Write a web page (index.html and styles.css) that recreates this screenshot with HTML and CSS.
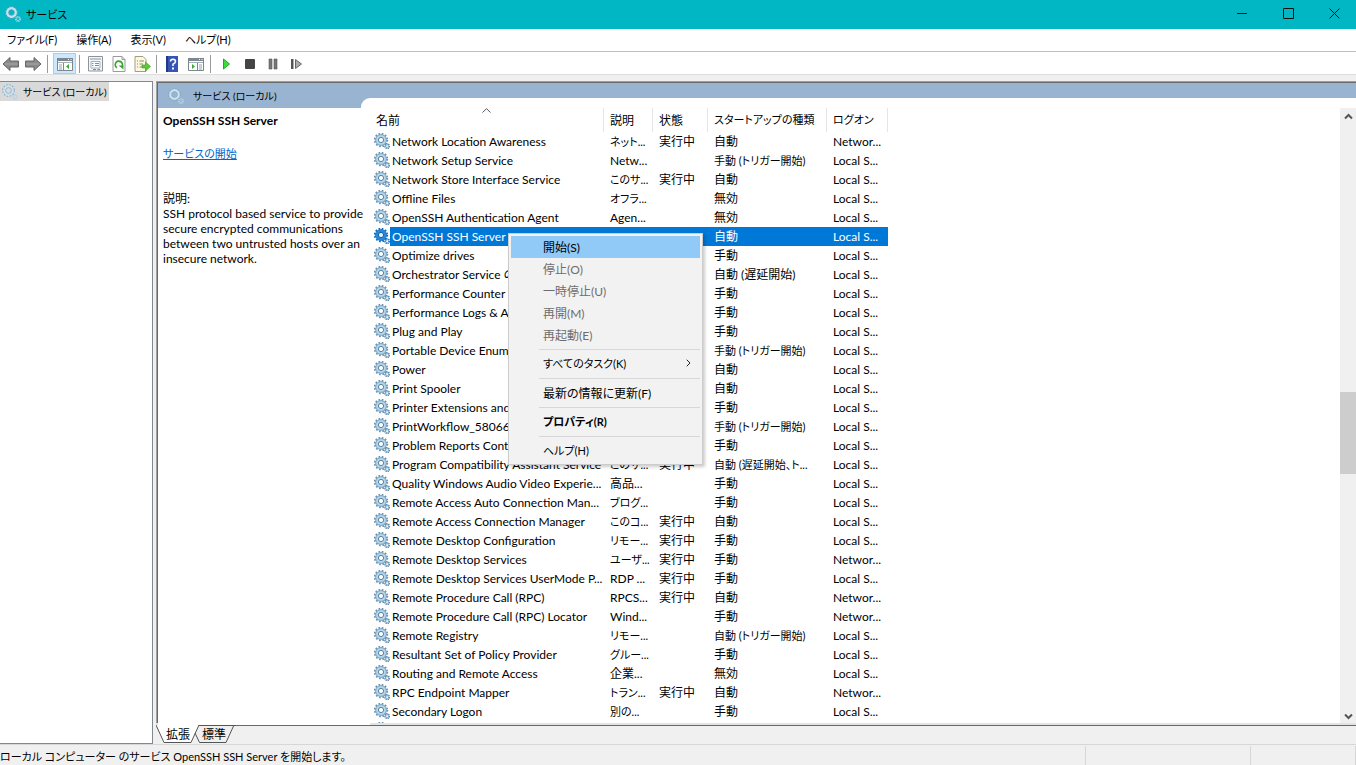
FILE: index.html
```
<!DOCTYPE html>
<html lang="ja">
<head>
    <meta charset="UTF-8">
    <meta name="viewport" content="width=device-width, initial-scale=1.0">
    <title>サービス</title>
    <link rel="stylesheet" href="styles.css">
</head>
<body>
    <svg class="defs" aria-hidden="true">
        <symbol id="gear" viewBox="0 0 16 16">
            <circle cx="7" cy="7" r="6" fill="#a9cbe2" stroke="#6a91af" stroke-width="2.4" stroke-dasharray="1.6 1.54"/>
            <circle cx="7" cy="7" r="4" fill="#fff" stroke="#b4d5ea" stroke-width="3"/>
            <circle cx="7" cy="7" r="5.3" fill="none" stroke="#7fa5c2" stroke-width=".8"/>
            <circle cx="7" cy="7" r="2.6" fill="#fff" stroke="#5480a3" stroke-width="1"/>
            <circle cx="13.2" cy="13.2" r="2.2" fill="#b4d5ea" stroke="#5f88a8" stroke-width="1.8" stroke-dasharray="1 .73"/>
            <circle cx="13.2" cy="13.2" r=".8" fill="#fff"/>
        </symbol>
        <symbol id="gear-light" viewBox="0 0 16 16">
            <circle cx="6.5" cy="6.5" r="5.5" fill="none" stroke="#7fa3bd" stroke-width="1.6" stroke-dasharray="1.5 1.38"/>
            <circle cx="6.5" cy="6.5" r="4.2" fill="none" stroke="#c9e2f1" stroke-width="2.4"/>
            <circle cx="6.5" cy="6.5" r="2.9" fill="none" stroke="#7fa3bd" stroke-width=".6"/>
            <circle cx="13" cy="13" r="2" fill="none" stroke="#b5d3e5" stroke-width="2" stroke-dasharray="1 .57"/>
        </symbol>
        <symbol id="gear-selected" viewBox="0 0 16 16">
            <circle cx="7" cy="7" r="6" fill="#2b87d6" stroke="#0f6cbd" stroke-width="2.4" stroke-dasharray="1.6 1.54"/>
            <circle cx="7" cy="7" r="4" fill="none" stroke="#2b87d6" stroke-width="3"/>
            <circle cx="7" cy="7" r="2.6" fill="#e6f3fd" stroke="#0763b3" stroke-width="1"/>
            <circle cx="13.2" cy="13.2" r="2" fill="none" stroke="#1473c8" stroke-width="2" stroke-dasharray="1 .57"/>
        </symbol>
    </svg>

    <div class="window">
        <header class="titlebar">
            <svg class="icon"><use href="#gear-light"/></svg>
            <h1>サービス</h1>
            <div class="window-buttons">
                <button aria-label="最小化"><svg viewBox="0 0 11 11"><path d="M0 5.500H10"/></svg></button>
                <button aria-label="最大化"><svg viewBox="0 0 11 11"><path d="M.5 .5H10.500V10.500H.5Z"/></svg></button>
                <button aria-label="閉じる"><svg viewBox="0 0 11 11"><path d="M.5 .5L10.500 10.500M10.500 .5L.5 10.500"/></svg></button>
            </div>
        </header>

        <nav class="menubar">
            <button>ファイル(F)</button>
            <button>操作(A)</button>
            <button>表示(V)</button>
            <button>ヘルプ(H)</button>
        </nav>

        <div class="toolbar">
            <button aria-label="戻る"><svg viewBox="0 0 18 16"><path d="M1 8L8 1.500V5H16.500V11H8V14.500Z" fill="#8b8b8b" stroke="#666"/><path d="M3 8H15.500" stroke="#a9a9a9"/></svg></button>
            <button aria-label="進む"><svg viewBox="0 0 18 16"><path d="M17 8L10 1.500V5H1.500V11H10V14.500Z" fill="#8b8b8b" stroke="#666"/><path d="M2.500 8H15" stroke="#a9a9a9"/></svg></button>
            <span class="sep"></span>
            <button class="active" aria-label="コンソール ツリーの表示">
                <svg viewBox="0 0 18 16">
                    <path d="M1.500 2.500H16.500V14.500H1.500Z" fill="#fff" stroke="#7d8790"/>
                    <path d="M1 2H17V5H1Z" fill="#7d8790"/><path d="M12 3.500H13M14.500 3.500H15.500" stroke="#fff"/>
                    <path d="M2 6.500H16" stroke="#a8b0b7"/><path d="M7.500 7V14" stroke="#7d8790"/>
                    <path d="M3 9H6M3 11H6M3 13H6" stroke="#8fa3b5"/><path d="M13 8V13L10 10.500Z" fill="#3cab34"/>
                </svg>
            </button>
            <span class="sep"></span>
            <button class="wide" aria-label="プロパティ">
                <svg viewBox="0 0 18 16">
                    <path d="M2.500 .5H16.500V15H2.500Z" fill="#f4f7fa" stroke="#8b949c"/><path d="M4 3H15" stroke="#8b949c"/>
                    <path d="M5 5.500H14V12H5Z" fill="#fff" stroke="#9fb1c2"/><path d="M6 7.500H7.500M9 7.500H13M6 9.500H7.500M9 9.500H13" stroke="#7c91a5"/>
                    <path d="M7 13.500H10M11.500 13.500H14" stroke="#3d9cd8"/>
                </svg>
            </button>
            <button aria-label="最新の情報に更新">
                <svg viewBox="0 0 18 16">
                    <path d="M3 .5H12L15 3.500V15.500H3Z" fill="#fff" stroke="#9b9b9b"/><path d="M12 .5V3.500H15" fill="none" stroke="#9b9b9b"/>
                    <path d="M7 11.800A3.600 3.600 0 1 1 12 10.500" fill="none" stroke="#3aa832" stroke-width="1.800"/><path d="M8.500 9.500H13.500V13.500Z" fill="#3aa832"/>
                </svg>
            </button>
            <button aria-label="一覧のエクスポート">
                <svg viewBox="0 0 18 16">
                    <path d="M2 .5H10L13 3.500V15.500H2Z" fill="#fdf8e0" stroke="#a49c80"/>
                    <path d="M4 5H5M6.500 5H11M4 8H5M6.500 8H10M4 11H5M6.500 11H9" stroke="#8f8a70"/>
                    <path d="M9 9H12.500V6L17.500 10.500L12.500 15V12H9Z" fill="#5dc936" stroke="#3d9a25" stroke-width=".6"/>
                </svg>
            </button>
            <span class="sep"></span>
            <button class="wide" aria-label="ヘルプ"><svg viewBox="0 0 18 16"><path d="M3 0H15V16H3Z" fill="#3455b5"/><path d="M3 0H5V16H3Z" fill="#203a86"/><path d="M7.500 5.500Q7.500 3.200 10 3.200T12.500 5.500Q12.500 7 10 8.200V10" fill="none" stroke="#fff" stroke-width="1.600"/><path d="M9 11.500H11V13.500H9Z" fill="#fff"/></svg></button>
            <button aria-label="操作ウィンドウの表示">
                <svg viewBox="0 0 18 16">
                    <path d="M1.500 2.500H16.500V14.500H1.500Z" fill="#fff" stroke="#7d8790"/>
                    <path d="M1 2H17V5H1Z" fill="#7d8790"/><path d="M12 3.500H13M14.500 3.500H15.500" stroke="#fff"/>
                    <path d="M2 6.500H16" stroke="#a8b0b7"/><path d="M10.500 7V14" stroke="#7d8790"/>
                    <path d="M12 9H15M12 11H15M12 13H15" stroke="#8fa3b5"/><path d="M5 8V13L8 10.500Z" fill="#3cab34"/>
                </svg>
            </button>
            <span class="sep"></span>
            <button class="wide" aria-label="サービスの開始"><svg viewBox="0 0 18 16"><path d="M6.500 3L12.500 8L6.500 13Z" fill="#3ddc3d" stroke="#20a820"/></svg></button>
            <button aria-label="サービスの停止"><svg viewBox="0 0 18 16"><rect x="4" y="3" width="10" height="10" rx="1" fill="#444"/></svg></button>
            <button aria-label="サービスの一時停止"><svg viewBox="0 0 18 16"><path d="M5 3H8V13H5ZM10 3H13V13H10Z" fill="#777" stroke="#555" stroke-width=".6"/></svg></button>
            <button aria-label="サービスの再起動"><svg viewBox="0 0 18 16"><path d="M4 3H6.500V13H4Z" fill="#555"/><path d="M8.500 3.500L14.500 8L8.500 12.500Z" fill="#aaa" stroke="#666"/></svg></button>
        </div>

        <main class="panes">
            <aside class="tree">
                <button class="tree-item"><svg class="icon"><use href="#gear-light"/></svg><span>サービス (ローカル)</span></button>
            </aside>

            <section class="view">
                <div class="view-body">
                    <div class="detail">
                        <h2 class="detail-title"><svg class="icon"><use href="#gear-light"/></svg>サービス (ローカル)</h2>
                        <div class="detail-text">
                            <h3>OpenSSH SSH Server</h3>
                            <a href="#">サービスの開始</a>
                            <p class="label">説明:</p>
                            <p>SSH protocol based service to provide secure encrypted communications between two untrusted hosts over an insecure network.</p>
                        </div>
                    </div>
                    <div class="list">
                        <table>
                            <colgroup>
                                <col class="c-name"><col class="c-desc"><col class="c-state"><col class="c-start"><col class="c-logon">
                            </colgroup>
                            <thead>
                                <tr>
                                    <th>名前<svg class="sort" viewBox="0 0 9 5"><path d="M.5 4.500L4.500 .7L8.500 4.500"/></svg></th>
                                    <th>説明</th>
                                    <th>状態</th>
                                    <th class="kana">スタートアップの種類</th>
                                    <th class="kana">ログオン</th>
                                </tr>
                            </thead>
                            <tbody id="services"></tbody>
                        </table>
                    </div>
                    <div class="scrollbar">
                        <button aria-label="上へ"><svg viewBox="0 0 9 7"><path d="M1 5.500L4.500 2L8 5.500"/></svg></button>
                        <div class="track"><div class="thumb"></div></div>
                        <button aria-label="下へ"><svg viewBox="0 0 9 7"><path d="M1 1.500L4.500 5L8 1.500"/></svg></button>
                    </div>
                </div>
                <div class="tabs">
                    <svg class="tab-shape" viewBox="0 0 80 19"><path d="M0 0L8 17.500H35L43 0Z" fill="#fff"/><path d="M0 0L8 17.500H35L43 0M39 8L43.500 17.500H70L78 0M43 .5H80" fill="none" stroke="#555"/></svg>
                    <button>拡張</button>
                    <button>標準</button>
                </div>
            </section>
        </main>

        <footer class="statusbar">
            <span class="message">ローカル コンピューター のサービス OpenSSH SSH Server を開始します。</span>
            <span class="cell"></span>
            <span class="cell last"></span>
        </footer>

        <div class="context-menu">
            <button class="hover">開始(S)</button>
            <button disabled>停止(O)</button>
            <button disabled>一時停止(U)</button>
            <button disabled>再開(M)</button>
            <button disabled>再起動(E)</button>
            <hr>
            <button class="kana">すべてのタスク(K)<svg viewBox="0 0 5 8"><path d="M.7 .7L4 4L.7 7.300"/></svg></button>
            <hr>
            <button>最新の情報に更新(F)</button>
            <hr>
            <button class="kana default">プロパティ(R)</button>
            <hr>
            <button class="kana">ヘルプ(H)</button>
        </div>
    </div>

    <script src="script.js"></script>
</body>
</html>
```
FILE: script.js
```
// name, description, state, startup type, log on as
const services = [
    ["Network Location Awareness", "ネット...", "実行中", "自動", "Networ..."],
    ["Network Setup Service", "Netw...", "", "手動 (トリガー開始)", "Local S..."],
    ["Network Store Interface Service", "このサ...", "実行中", "自動", "Local S..."],
    ["Offline Files", "オフラ...", "", "無効", "Local S..."],
    ["OpenSSH Authentication Agent", "Agen...", "", "無効", "Local S..."],
    ["OpenSSH SSH Server", "SSH ...", "", "自動", "Local S..."],
    ["Optimize drives", "", "", "手動", "Local S..."],
    ["Orchestrator Service の更新", "", "", "自動 (遅延開始)", "Local S..."],
    ["Performance Counter", "", "", "手動", "Local S..."],
    ["Performance Logs & Alerts", "", "", "手動", "Local S..."],
    ["Plug and Play", "", "", "手動", "Local S..."],
    ["Portable Device Enumerator", "", "", "手動 (トリガー開始)", "Local S..."],
    ["Power", "", "", "自動", "Local S..."],
    ["Print Spooler", "", "", "自動", "Local S..."],
    ["Printer Extensions and", "", "", "手動", "Local S..."],
    ["PrintWorkflow_580669", "", "", "手動 (トリガー開始)", "Local S..."],
    ["Problem Reports Control", "", "", "手動", "Local S..."],
    ["Program Compatibility Assistant Service", "このサ...", "実行中", "自動 (遅延開始、ト...", "Local S..."],
    ["Quality Windows Audio Video Experie...", "高品...", "", "手動", "Local S..."],
    ["Remote Access Auto Connection Man...", "ブログ...", "", "手動", "Local S..."],
    ["Remote Access Connection Manager", "このコ...", "実行中", "自動", "Local S..."],
    ["Remote Desktop Configuration", "リモー...", "実行中", "手動", "Local S..."],
    ["Remote Desktop Services", "ユーザ...", "実行中", "手動", "Networ..."],
    ["Remote Desktop Services UserMode P...", "RDP ...", "実行中", "手動", "Local S..."],
    ["Remote Procedure Call (RPC)", "RPCS...", "実行中", "自動", "Networ..."],
    ["Remote Procedure Call (RPC) Locator", "Wind...", "", "手動", "Networ..."],
    ["Remote Registry", "リモー...", "", "自動 (トリガー開始)", "Local S..."],
    ["Resultant Set of Policy Provider", "グルー...", "", "手動", "Local S..."],
    ["Routing and Remote Access", "企業...", "", "無効", "Local S..."],
    ["RPC Endpoint Mapper", "トラン...", "実行中", "自動", "Networ..."],
    ["Secondary Logon", "別の...", "", "手動", "Local S..."],
    ["", "", "", "", ""]
];

const selected = "OpenSSH SSH Server";
const kana = /[\u3041-\u30ff]/;
const tbody = document.getElementById("services");

services.forEach(([name, ...rest]) => {
    const row = tbody.insertRow();
    const isSelected = name === selected;
    if (isSelected) row.className = "selected";

    const cell = row.insertCell();
    cell.innerHTML = `<svg class="icon"><use href="#${isSelected ? "gear-selected" : "gear"}"/></svg><span></span>`;
    cell.querySelector("span").textContent = name;

    rest.forEach(text => {
        const td = row.insertCell();
        td.textContent = text;
        if (kana.test(text)) td.className = "kana";
    });
});
```
FILE: styles.css
```
* {
    box-sizing: border-box;
}
body {
    margin: 0;
    font-family: Lato, "Noto Sans CJK JP", sans-serif;
    font-size: 12px;
    font-feature-settings: "palt";
    color: #000;
    background: #f0f0f0;
}
h1, h2, h3, p {
    margin: 0;
    font-size: 12px;
    font-weight: normal;
}
button {
    padding: 0;
    border: none;
    background: none;
    font: inherit;
    font-feature-settings: inherit;
    color: inherit;
}
svg {
    display: block;
}
.defs {
    display: none;
}
.icon {
    width: 16px;
    height: 16px;
    flex: none;
}
.window {
    position: relative;
    display: flex;
    flex-direction: column;
    height: 100vh;
    overflow: hidden;
}

/* title bar */
.titlebar {
    display: flex;
    align-items: center;
    height: 29px;
    padding: 0 0 2px 5px;
    gap: 5px;
    background: #00b7c3;
}
.titlebar h1 {
    flex: 1;
}
.window-buttons {
    display: flex;
    margin-right: -1px;
}
.window-buttons button {
    display: grid;
    place-items: center;
    width: 46px;
    height: 27px;
}
.window-buttons svg {
    width: 11px;
    height: 11px;
    fill: none;
    stroke: #111;
}

/* menu and toolbar */
.menubar {
    display: flex;
    gap: 19px;
    height: 23px;
    padding: 0 7px 2px;
    background: #fff;
    border-bottom: 1px solid #bfbfbf;
}
.toolbar {
    display: flex;
    align-items: center;
    height: 23px;
    padding-top: 1px;
    background: #fff;
    border-bottom: 1px solid #ddd;
}
.toolbar button {
    display: grid;
    place-items: center;
    width: 23px;
    height: 21px;
}
.toolbar button:first-child {
    width: 21px;
}
.toolbar .wide {
    width: 24px;
}
.toolbar svg {
    width: 18px;
    height: 16px;
}
.toolbar .active {
    margin-left: 2px;
    background: #cce8ff;
    border: 1px solid #99d1ff;
}
.toolbar .sep {
    width: 1px;
    height: 18px;
    margin: 0 3px;
    background: #999;
}

/* panes */
.panes {
    display: flex;
    flex: 1;
    gap: 3px;
    min-height: 0;
    padding-top: 6px;
}
.tree {
    width: 153px;
    background: #fff;
    border: 1px solid #828790;
    border-left: none;
}
.tree-item {
    display: flex;
    align-items: center;
    height: 19px;
    padding: 0 2px;
    gap: 5px;
    background: #d9d9d9;
}
.view {
    display: flex;
    flex: 1;
    flex-direction: column;
    min-width: 0;
}
.view-body {
    display: flex;
    flex: 1;
    min-height: 0;
    padding: 1px 0 0 1px;
    background: #99b4d1;
    border-top: 1px solid #a0a0a0;
    border-left: 1px solid #a0a0a0;
    box-shadow: inset 1px 1px #696969;
}
.detail {
    display: flex;
    flex-direction: column;
    width: 203px;
}
.detail-title {
    display: flex;
    align-items: center;
    gap: 9px;
    height: 25px;
    padding-left: 10px;
}
.detail-text {
    position: relative;
    z-index: 1;
    flex: 1;
    margin-right: -9px;
    padding: 5px 0 0 5px;
    line-height: 15px;
    background: #fff;
}
.detail-text h3 {
    margin-bottom: 18px;
    font-weight: bold;
}
.detail-text a {
    color: #0066cc;
}
.detail-text .label {
    margin-top: 30px;
}
.list {
    flex: 1;
    min-width: 0;
    margin-top: 15px;
    padding: 10px 0 0 9px;
    overflow: hidden;
    background: #fff;
    border-top-left-radius: 9px;
}
table {
    width: 518px;
    table-layout: fixed;
    border-spacing: 0;
}
.c-name { width: 234px; }
.c-desc { width: 49px; }
.c-state { width: 55px; }
.c-start { width: 119px; }
.c-logon { width: 61px; }
th {
    position: relative;
    height: 24px;
    padding: 0 0 2px 6px;
    font-weight: normal;
    text-align: left;
    white-space: nowrap;
    border-right: 1px solid #e5e5e5;
}
.sort {
    position: absolute;
    top: 0;
    left: 48%;
    width: 9px;
    height: 5px;
    fill: none;
    stroke: #555;
}
td {
    height: 19px;
    padding: 0 0 0 6px;
    line-height: 19px;
    white-space: nowrap;
    overflow: hidden;
}
td:first-child {
    display: flex;
    padding-left: 4px;
}
td:first-child span {
    flex: 1;
    min-width: 0;
    padding-left: 2px;
    overflow: hidden;
}
td .icon {
    margin-top: 1px;
}
.selected td {
    color: #fff;
    background: #0078d7;
}
.selected td:first-child {
    background: none;
}
.selected td:first-child span {
    background: #0078d7;
}

/* scroll bar */
.scrollbar {
    display: flex;
    flex-direction: column;
    width: 16px;
    margin-top: 15px;
    padding-top: 10px;
    background: #f0f0f0;
    box-shadow: inset 0 10px #fff;
}
.scrollbar button {
    display: grid;
    place-items: center;
    height: 17px;
}
.scrollbar svg {
    width: 9px;
    height: 7px;
    fill: none;
    stroke: #555;
    stroke-width: 2;
}
.track {
    display: flex;
    flex: 1;
    flex-direction: column;
}
.track::before {
    content: "";
    flex: 266;
}
.track::after {
    content: "";
    flex: 233;
}
.thumb {
    flex: 82;
    background: #cdcdcd;
}

/* tabs and status bar */
.tabs {
    position: relative;
    display: flex;
    gap: 12px;
    height: 19px;
    padding-left: 10px;
    border-top: 1px solid #696969;
    box-shadow: 0 -2px #e3e3e3;
}
.tabs button {
    position: relative;
    height: 18px;
    line-height: 18px;
}
.tab-shape {
    position: absolute;
    top: -1px;
    left: 0;
    width: 80px;
    height: 19px;
}
.statusbar {
    display: flex;
    height: 21px;
    border-top: 1px solid #d7d7d7;
}
.statusbar .message {
    flex: 1;
    line-height: 23px;
    white-space: nowrap;
}
.statusbar .cell {
    width: 165px;
    margin-top: 1px;
    border-left: 1px solid #d7d7d7;
}
.statusbar .last {
    width: 106px;
    border-right: 1px solid #d7d7d7;
}

/* context menu */
.context-menu {
    position: absolute;
    z-index: 2;
    top: 233px;
    left: 508px;
    width: 195px;
    padding: 2px;
    background: #f2f2f2;
    border: 1px solid #ccc;
    box-shadow: 2px 2px 3px rgba(0, 0, 0, 0.2);
}
.context-menu button {
    display: flex;
    align-items: center;
    justify-content: space-between;
    width: 100%;
    height: 22px;
    padding: 0 9px 2px 32px;
}
.context-menu button:disabled {
    color: #6d6d6d;
}
.context-menu .hover {
    background: #91c9f7;
}
.context-menu .default {
    font-weight: bold;
}
.context-menu svg {
    width: 5px;
    height: 8px;
    fill: none;
    stroke: #222;
}
.context-menu hr {
    height: 1px;
    margin: 3px 0 3px 28px;
    border: none;
    background: #d7d7d7;
}

.kana,
.titlebar h1,
.menubar,
.detail-text a,
.statusbar {
    font-size: 11px;
}
.tree-item,
.detail-title {
    font-size: 10px;
}
```
